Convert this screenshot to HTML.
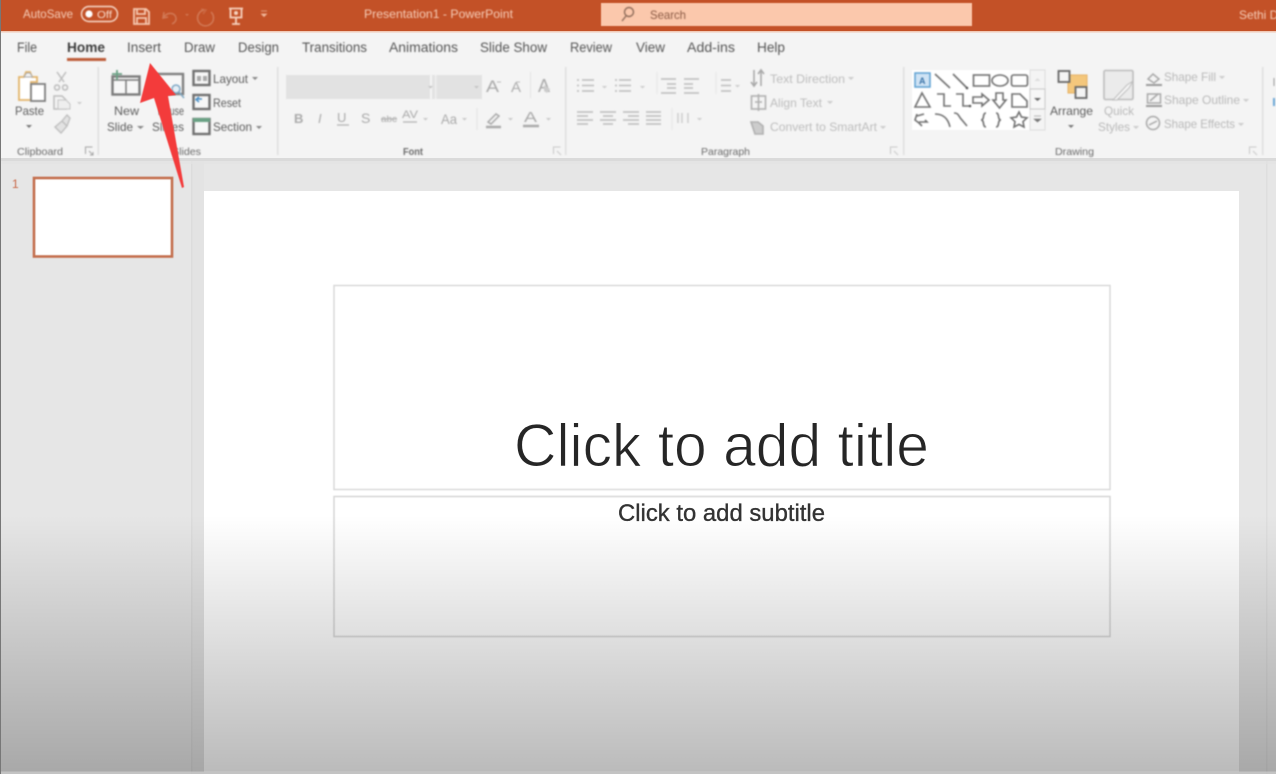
<!DOCTYPE html>
<html><head><meta charset="utf-8"><title>PowerPoint</title>
<style>
html,body{margin:0;padding:0;width:1276px;height:774px;overflow:hidden;background:#e6e6e6}
svg{display:block}
text{font-family:"Liberation Sans",sans-serif}
.b{filter:blur(.7px)}
.s{filter:blur(.45px)}
</style></head><body>
<svg width="1276" height="774" viewBox="0 0 1276 774" xmlns="http://www.w3.org/2000/svg">
<defs>
<linearGradient id="sh" x1="0" y1="0" x2="0" y2="1"><stop offset="0" stop-color="#000" stop-opacity="0"/><stop offset="1" stop-color="#000" stop-opacity=".27"/></linearGradient>
</defs>
<!-- base -->
<rect width="1276" height="774" fill="#e6e6e6"/>
<rect x="192" y="160" width="12" height="614" fill="#e3e3e3"/>
<rect x="191" y="160" width="1.5" height="614" fill="#dcdcdc"/>
<rect x="1266" y="160" width="1.5" height="614" fill="#dedede"/>
<rect x="204" y="191" width="1035" height="581" fill="#fff"/>
<rect x="0" y="31" width="1276" height="129" fill="#f4f4f4"/>
<rect x="0" y="158" width="1276" height="3" fill="#dadada"/>
<rect x="0" y="161" width="1276" height="3" fill="#e2e2e2" opacity=".7"/>
<!-- title bar -->
<rect width="1276" height="31" fill="#c35127"/>
<rect y="31" width="1276" height="1.5" fill="#f1c9b6"/>
<rect class="s" x="601" y="3" width="371" height="23" fill="#fbc8ac"/>
<g class="b">
<g fill="#f6cdb8" font-size="12">
<text x="23" y="18" textLength="50" lengthAdjust="spacingAndGlyphs">AutoSave</text>
<text x="364" y="18" textLength="149" lengthAdjust="spacingAndGlyphs">Presentation1  -  PowerPoint</text>
<text x="1239" y="19" font-size="12">Sethi D</text>
</g>
<rect x="81.5" y="6.5" width="36" height="15" rx="7.5" fill="none" stroke="#f8dccd" stroke-width="1.4"/>
<circle cx="89" cy="14" r="3.6" fill="#fff"/>
<text x="97" y="18" font-size="10" fill="#f8dccd" textLength="15" lengthAdjust="spacingAndGlyphs">Off</text>
<!-- save -->
<g fill="none" stroke="#f5c8b0" stroke-width="1.8"><path d="M134 9h12l3 3v12h-15z"/><path d="M137 9v5h8V9"/><path d="M137 24v-6h9v6"/></g>
<!-- undo/redo -->
<g fill="none" stroke="#d27a57" stroke-width="1.5"><path d="M164 12l-1 6 5-1"/><path d="M164 17c3-5 11-5 12 1 .5 3-2 5-4 6"/><path d="M204 10a8 8 0 1 0 7 2"/><path d="M201 9l5 1-3 4" opacity=".6"/></g>
<path d="M185 14h4l-2 2z" fill="#d27a57"/>
<!-- present -->
<g fill="none" stroke="#f7d3c0" stroke-width="1.8"><path d="M229 8.500h14M230.500 8.500v9h11v-9M236 17.500v6M232 24h8"/></g>
<circle cx="236" cy="13" r="2" fill="#f7d3c0"/>
<path d="M261 11h6M261.500 14h5l-2.500 2.500z" fill="#f0b89c" stroke="#f0b89c" stroke-width=".8"/>
<!-- search -->
<g fill="none" stroke="#8d6a58" stroke-width="1.400"><circle cx="629" cy="12" r="4.500"/><path d="M626 16l-4 5"/></g>
<text x="650" y="19" font-size="12" fill="#8b5b45" textLength="36" lengthAdjust="spacingAndGlyphs">Search</text>
</g>
<!-- tabs -->
<g class="b" font-size="13.500" fill="#555">
<text x="17" y="52" textLength="20" lengthAdjust="spacingAndGlyphs">File</text>
<text x="67" y="52" textLength="38" lengthAdjust="spacingAndGlyphs" font-weight="bold" fill="#3c3c3c">Home</text>
<text x="127" y="52" textLength="34" lengthAdjust="spacingAndGlyphs">Insert</text>
<text x="184" y="52" textLength="31" lengthAdjust="spacingAndGlyphs">Draw</text>
<text x="238" y="52" textLength="41" lengthAdjust="spacingAndGlyphs">Design</text>
<text x="302" y="52" textLength="65" lengthAdjust="spacingAndGlyphs">Transitions</text>
<text x="389" y="52" textLength="69" lengthAdjust="spacingAndGlyphs">Animations</text>
<text x="480" y="52" textLength="67" lengthAdjust="spacingAndGlyphs">Slide Show</text>
<text x="570" y="52" textLength="42" lengthAdjust="spacingAndGlyphs">Review</text>
<text x="636" y="52" textLength="29" lengthAdjust="spacingAndGlyphs">View</text>
<text x="687" y="52" textLength="48" lengthAdjust="spacingAndGlyphs">Add-ins</text>
<text x="757" y="52" textLength="28" lengthAdjust="spacingAndGlyphs">Help</text>
<rect x="67" y="58" width="39" height="3" fill="#bd5c39"/>
</g>
<!-- ribbon -->
<g class="b">
<!-- separators -->
<g fill="#dedede"><rect x="97.500" y="67" width="1.500" height="88"/><rect x="277" y="67" width="1.500" height="88"/><rect x="565" y="67" width="1.500" height="88"/><rect x="903" y="67" width="1.500" height="88"/><rect x="1262" y="67" width="1.500" height="88"/></g>
<!-- clipboard -->
<path d="M19 77h5l2-5 4 0 2 5h5v5h-6v18H19z" fill="#fff" stroke="#e3b469" stroke-width="1.800"/>
<path d="M24 77l2.500-4h3.500l2.500 4z" fill="#f3f3f3" stroke="#a8a8a8" stroke-width="1"/>
<rect x="31" y="84" width="14" height="17" fill="#fff" stroke="#7e7e7e" stroke-width="1.800"/>
<text x="15" y="115" font-size="12" fill="#5c5c5c" textLength="29" lengthAdjust="spacingAndGlyphs">Paste</text>
<path d="M26 125h6l-3 3z" fill="#777"/>
<path d="M57 72l7 10M66 72l-7 10M57 85a2.500 2.500 0 1 0 .1 0M65 85a2.500 2.500 0 1 0 .1 0" fill="none" stroke="#bdbdbd" stroke-width="1.500"/>
<path d="M54 96h8l4 4v9H54z" fill="none" stroke="#bdbdbd" stroke-width="1.500"/><path d="M58 100h8l4 4v5H58z" fill="#eee" stroke="#c4c4c4"/>
<path d="M77 102h5l-2.500 2.500z" fill="#ccc"/>
<path d="M55 127l7-6 5 5-6 7zM62 121l5-6 3 3-3 8" fill="#e2e2e2" stroke="#bdbdbd" stroke-width="1.300"/>
<!-- new slide -->
<rect x="112.500" y="76.500" width="27" height="18" fill="#f7f7f7" stroke="#7b7b7b" stroke-width="2.400"/>
<path d="M113 80h26M126 80v14" stroke="#7b7b7b" stroke-width="1.500" fill="none"/>
<path d="M117 70v10M112 74h10" stroke="#6aa184" stroke-width="1.800"/>
<text x="114" y="115" font-size="12" fill="#5c5c5c" textLength="25" lengthAdjust="spacingAndGlyphs">New</text>
<text x="107" y="131" font-size="12" fill="#5c5c5c" textLength="26" lengthAdjust="spacingAndGlyphs">Slide</text>
<path d="M137 126h7l-3.500 3z" fill="#888"/>
<!-- reuse slides (behind arrow) -->
<rect x="158" y="74" width="25" height="20" fill="#f7f7f7" stroke="#808080" stroke-width="2.400"/>
<circle cx="176" cy="89" r="4" fill="#e5eef5" stroke="#7fa8c4" stroke-width="1.500"/><path d="M179 92l5 6" stroke="#7fa8c4" stroke-width="1.500"/>
<text x="158" y="115" font-size="12" fill="#5c5c5c" textLength="26" lengthAdjust="spacingAndGlyphs">Reuse</text>
<text x="152" y="131" font-size="12" fill="#5c5c5c" textLength="32" lengthAdjust="spacingAndGlyphs">Slides</text>
<!-- layout/reset/section -->
<rect x="193.500" y="71" width="16" height="14" fill="#f7f7f7" stroke="#707070" stroke-width="2.400"/><path d="M197 76h4v5h-4zM203 76h4v5h-4z" fill="#a9a9a9"/>
<rect x="193.500" y="95" width="16" height="14" fill="#f7f7f7" stroke="#707070" stroke-width="2.400"/><path d="M196 99h6M199 97l-3 2.500 3 2.500" fill="none" stroke="#4a90c7" stroke-width="1.500"/>
<rect x="193.500" y="119" width="16" height="15" fill="#f7f7f7" stroke="#707070" stroke-width="2.400"/><rect x="193" y="118" width="17" height="4" fill="#6aa184"/>
<g font-size="12" fill="#5c5c5c">
<text x="213" y="83" textLength="35" lengthAdjust="spacingAndGlyphs">Layout</text>
<text x="213" y="107" textLength="28" lengthAdjust="spacingAndGlyphs">Reset</text>
<text x="213" y="131" textLength="39" lengthAdjust="spacingAndGlyphs">Section</text>
</g>
<path d="M252 77h6l-3 3zM256 126h6l-3 3z" fill="#888"/>
<!-- font -->
<rect x="286" y="75" width="144" height="24" fill="#e2e2e2"/>
<rect x="437" y="75" width="45" height="24" fill="#e2e2e2"/>
<rect x="432" y="75" width="5" height="24" fill="#e2e2e2"/>
<rect x="435" y="75" width="1.500" height="24" fill="#f0f0f0"/>
<path d="M428 86h5l-2.500 2.500zM474 86h5l-2.500 2.500z" fill="#c4c4c4"/>
<g fill="#aaa">
<text x="486" y="92" font-size="17" textLength="13" lengthAdjust="spacingAndGlyphs">A</text>
<text x="511" y="92" font-size="14" textLength="10" lengthAdjust="spacingAndGlyphs">A</text>
<text x="538" y="92" font-size="18" textLength="12" lengthAdjust="spacingAndGlyphs">A</text>
<text x="294" y="123" font-size="13" font-weight="bold">B</text>
<text x="318" y="123" font-size="13" font-style="italic">I</text>
<text x="337" y="122" font-size="13">U</text>
<text x="361" y="123" font-size="14">S</text>
<text x="381" y="122" font-size="9" textLength="16" lengthAdjust="spacingAndGlyphs">abc</text>
<text x="402" y="118" font-size="11" textLength="16" lengthAdjust="spacingAndGlyphs">AV</text>
<text x="441" y="124" font-size="14" textLength="16" lengthAdjust="spacingAndGlyphs">Aa</text>
<text x="524" y="122" font-size="15" textLength="13" lengthAdjust="spacingAndGlyphs">A</text>
</g>
<path d="M497 82h4M516 82h4" stroke="#bbb" stroke-width="1"/>
<path d="M530.500 72v26" stroke="#e4e4e4"/>
<path d="M544 85l6 4-3 4-3-2z" fill="#ccc"/>
<path d="M337 125h12M381 119h16M403 122h14" stroke="#b4b4b4" stroke-width="1.300"/>
<path d="M486 127h15" stroke="#aaa" stroke-width="2.500"/><path d="M488 122l8-8 3 2-8 8z" fill="none" stroke="#aaa" stroke-width="1.500"/>
<path d="M523 126h16" stroke="#aaa" stroke-width="2.500"/>
<path d="M423 118h5l-2.500 2.500zM462 118h5l-2.500 2.500zM508 118h5l-2.500 2.500zM546 118h5l-2.500 2.500z" fill="#c8c8c8"/>
<path d="M477 108v22" stroke="#e4e4e4"/>
<!-- paragraph icons -->
<g stroke="#bcbcbc" stroke-width="1.600" fill="none">
<path d="M582 80h12M582 85.500h12M582 91h12M577 80h2M577 85.500h2M577 91h2"/>
<path d="M619 80h12M619 85.500h12M619 91h12M615 80h2M615 85.500h2M615 91h2"/>
<path d="M661 79h15M667 84h9M667 88h9M661 93h15"/>
<path d="M684 79h15M684 84h9M684 88h9M684 93h15"/>
<path d="M721 80h10M721 85.500h10M721 91h10"/>
<path d="M577 112h16M577 116h11M577 120h16M577 124h11"/>
<path d="M600 112h16M603 116h10M600 120h16M603 124h10"/>
<path d="M623 112h16M628 116h11M623 120h16M628 124h11"/>
<path d="M646 112h15M646 116h15M646 120h15M646 124h15"/>
<path d="M678 113v10M682 113v10M688 113v10" stroke="#d0d0d0"/>
<path d="M754 70v16M761 70v16M751 82l3 4 3-4M758 74l3-4 3 4" stroke="#a9a9a9"/>
<rect x="751.500" y="96" width="14" height="13" stroke="#b0b0b0"/><path d="M758.500 94v17M755 102h7" stroke="#b0b0b0"/>
<path d="M751 122h7l5 4v8h-8z" fill="#ccc" stroke="#b0b0b0"/>
</g>
<path d="M602 86h5l-2.500 2.500zM640 86h5l-2.500 2.500zM735 85h5l-2.500 2.500zM697 118h5l-2.500 2.500z" fill="#ccc"/>
<path d="M657 72v22M716 72v22M672 108v22" stroke="#e8e8e8"/>
<g font-size="12" fill="#bdbdbd">
<text x="770" y="83" textLength="75" lengthAdjust="spacingAndGlyphs">Text Direction</text>
<text x="770" y="107" textLength="52" lengthAdjust="spacingAndGlyphs">Align Text</text>
<text x="770" y="131" textLength="107" lengthAdjust="spacingAndGlyphs">Convert to SmartArt</text>
</g>
<path d="M848 77h6l-3 3zM827 101h6l-3 3zM880 126h6l-3 3z" fill="#ccc"/>
<!-- gallery -->
<rect x="912" y="70" width="118" height="60" fill="#fff"/>
<rect x="1030" y="70" width="15" height="60" fill="#f4f4f4" stroke="#dcdcdc"/>
<rect x="1030" y="89" width="15" height="20" fill="#f7f7f7" stroke="#c8c8c8"/>
<path d="M1034.500 81h6l-3-3z" fill="#ddd"/><path d="M1034 98h7l-3.500 3z" fill="#666"/><path d="M1034 116h7M1034 119h7l-3.500 3z" fill="#777" stroke="#777" stroke-width=".6"/>
<rect x="915" y="73" width="15" height="14" fill="#cfe3f4" stroke="#5b9fd1" stroke-width="1.500"/>
<text x="919" y="84" font-size="9" fill="#3b74a8" font-weight="bold">A</text>
<g fill="none" stroke="#707070" stroke-width="1.600">
<path d="M935 74l15 14M953 74l14 14"/>
<rect x="973.500" y="75" width="16" height="11"/>
<ellipse cx="1000" cy="80.500" rx="8" ry="5.500"/>
<rect x="1011.500" y="75" width="16" height="11" rx="2"/>
<path d="M922 93l8 14h-15z"/>
<path d="M937 94h7v12h7M956 94h7v12h7"/>
<path d="M973 97h9v-3l7 6-7 6v-3h-9z"/>
<path d="M996 93h7v7h3l-6.500 8-6.500-8h3z"/>
<path d="M1012 94h8l7 7v6h-15z"/>
<path d="M917 114l-2 6 4 3 3 3M917 116l7-2M919 122h8l-2-2"/>
<path d="M935 114c8 0 13 4 15 13M954 113c5 0 4 3 8 7l5 6"/>
<path d="M986 113c-4 0-1 7-5 7 4 0 1 7 5 7M996 113c4 0 1 7 5 7-4 0-1 7-5 7"/>
<path d="M1019 112l2.500 5 5.500.8-4 3.800 1 5.400-5-2.600-5 2.600 1-5.400-4-3.800 5.500-.8z"/>
</g>
<circle cx="967" cy="88" r="1.300" fill="#555"/><circle cx="970" cy="106" r="1.300" fill="#555"/>
<!-- arrange -->
<rect x="1068" y="75" width="19" height="18" fill="#f4c77c" stroke="#e5b163"/>
<rect x="1058.500" y="71" width="11" height="11" fill="#f4f4f4" stroke="#666" stroke-width="1.800"/>
<rect x="1075.500" y="87" width="11" height="11" fill="#f4f4f4" stroke="#666" stroke-width="1.800"/>
<text x="1050" y="115" font-size="12" fill="#5c5c5c" textLength="43" lengthAdjust="spacingAndGlyphs">Arrange</text>
<path d="M1068 125h6l-3 3z" fill="#777"/>
<!-- quick styles -->
<rect x="1104" y="70.500" width="29" height="29" rx="1.500" fill="#ebebeb" stroke="#bcbcbc" stroke-width="1.600"/>
<path d="M1113 100l14-15 6-4-4 7-12 12z" fill="#f6f6f6" stroke="#bdbdbd"/>
<g font-size="12" fill="#b9b9b9">
<text x="1104" y="115" textLength="30" lengthAdjust="spacingAndGlyphs">Quick</text>
<text x="1098" y="131" textLength="32" lengthAdjust="spacingAndGlyphs">Styles</text>
<text x="1164" y="81" textLength="52" lengthAdjust="spacingAndGlyphs">Shape Fill</text>
<text x="1164" y="104" textLength="76" lengthAdjust="spacingAndGlyphs">Shape Outline</text>
<text x="1164" y="128" textLength="71" lengthAdjust="spacingAndGlyphs">Shape Effects</text>
</g>
<path d="M1133 126h6l-3 3zM1219 76h6l-3 3zM1243 99h6l-3 3zM1238 123h6l-3 3z" fill="#ccc"/>
<g fill="none" stroke="#a8a8a8" stroke-width="1.500">
<path d="M1148 79l5-5 6 5-5 4z"/>
<rect x="1147.500" y="94" width="13" height="9"/><path d="M1150 101l8-7"/>
<circle cx="1153" cy="123" r="6.500"/><path d="M1149 125l8-4"/>
</g>
<path d="M1146 85h16M1146 106h16" stroke="#9a9a9a" stroke-width="2"/>
<!-- group labels -->
<g font-size="10.500" fill="#6c6c6c">
<text x="17" y="155" textLength="46" lengthAdjust="spacingAndGlyphs">Clipboard</text>
<text x="172" y="155" textLength="29" lengthAdjust="spacingAndGlyphs">Slides</text>
<text x="403" y="155" textLength="20" lengthAdjust="spacingAndGlyphs" font-weight="bold">Font</text>
<text x="701" y="155" textLength="49" lengthAdjust="spacingAndGlyphs">Paragraph</text>
<text x="1055" y="155" textLength="39" lengthAdjust="spacingAndGlyphs">Drawing</text>
</g>
<g fill="none" stroke="#a5a5a5" stroke-width="1"><path d="M85.500 154v-7h7M89 151l4 4M93 152v3h-3"/><path d="M553.500 154v-7h7M557 151l4 4" stroke="#c8c8c8"/><path d="M890.500 154v-7h7M894 151l4 4" stroke="#c8c8c8"/><path d="M1249.500 154v-7h7M1253 151l4 4" stroke="#c8c8c8"/></g>
<path d="M1274 78v8" stroke="#999"/><path d="M1274 98v8" stroke="#6ba6d6" stroke-width="2"/>
</g>
<!-- thumbnail -->
<rect class="s" x="34" y="178" width="138" height="78.500" fill="#fff" stroke="#c4704f" stroke-width="2.600"/>
<text class="s" x="12" y="188" font-size="12" fill="#c9694a">1</text>
<!-- placeholders -->
<rect class="s" x="334" y="285.500" width="776" height="204" fill="#fff" stroke="#dadada" stroke-width="1.500"/>
<rect class="s" x="334" y="496.500" width="776" height="140" fill="#fff" stroke="#d6d6d6" stroke-width="1.500"/>
<g style="filter:blur(.3px)">
<text x="514" y="466" font-size="60" fill="#262626" textLength="415" lengthAdjust="spacingAndGlyphs" stroke="#fff" stroke-width="1">Click to add title</text>
<text x="618" y="521" font-size="24" fill="#333" stroke="#333" stroke-width=".35" textLength="207" lengthAdjust="spacingAndGlyphs">Click to add subtitle</text>
</g>
<!-- bottom shade -->
<rect x="0" y="515" width="1276" height="259" fill="url(#sh)"/>
<rect x="0" y="771.500" width="1276" height="2.500" fill="#cfcfcf" opacity=".7"/>
<!-- left edge -->
<rect x="0" y="0" width="1" height="774" fill="#777"/>
<!-- arrow -->
<path class="s" d="M150 63L140 103L154 98L182 188L184 187L168 96L176 95Z" fill="#f33b3b"/>
</svg>
</body></html>
